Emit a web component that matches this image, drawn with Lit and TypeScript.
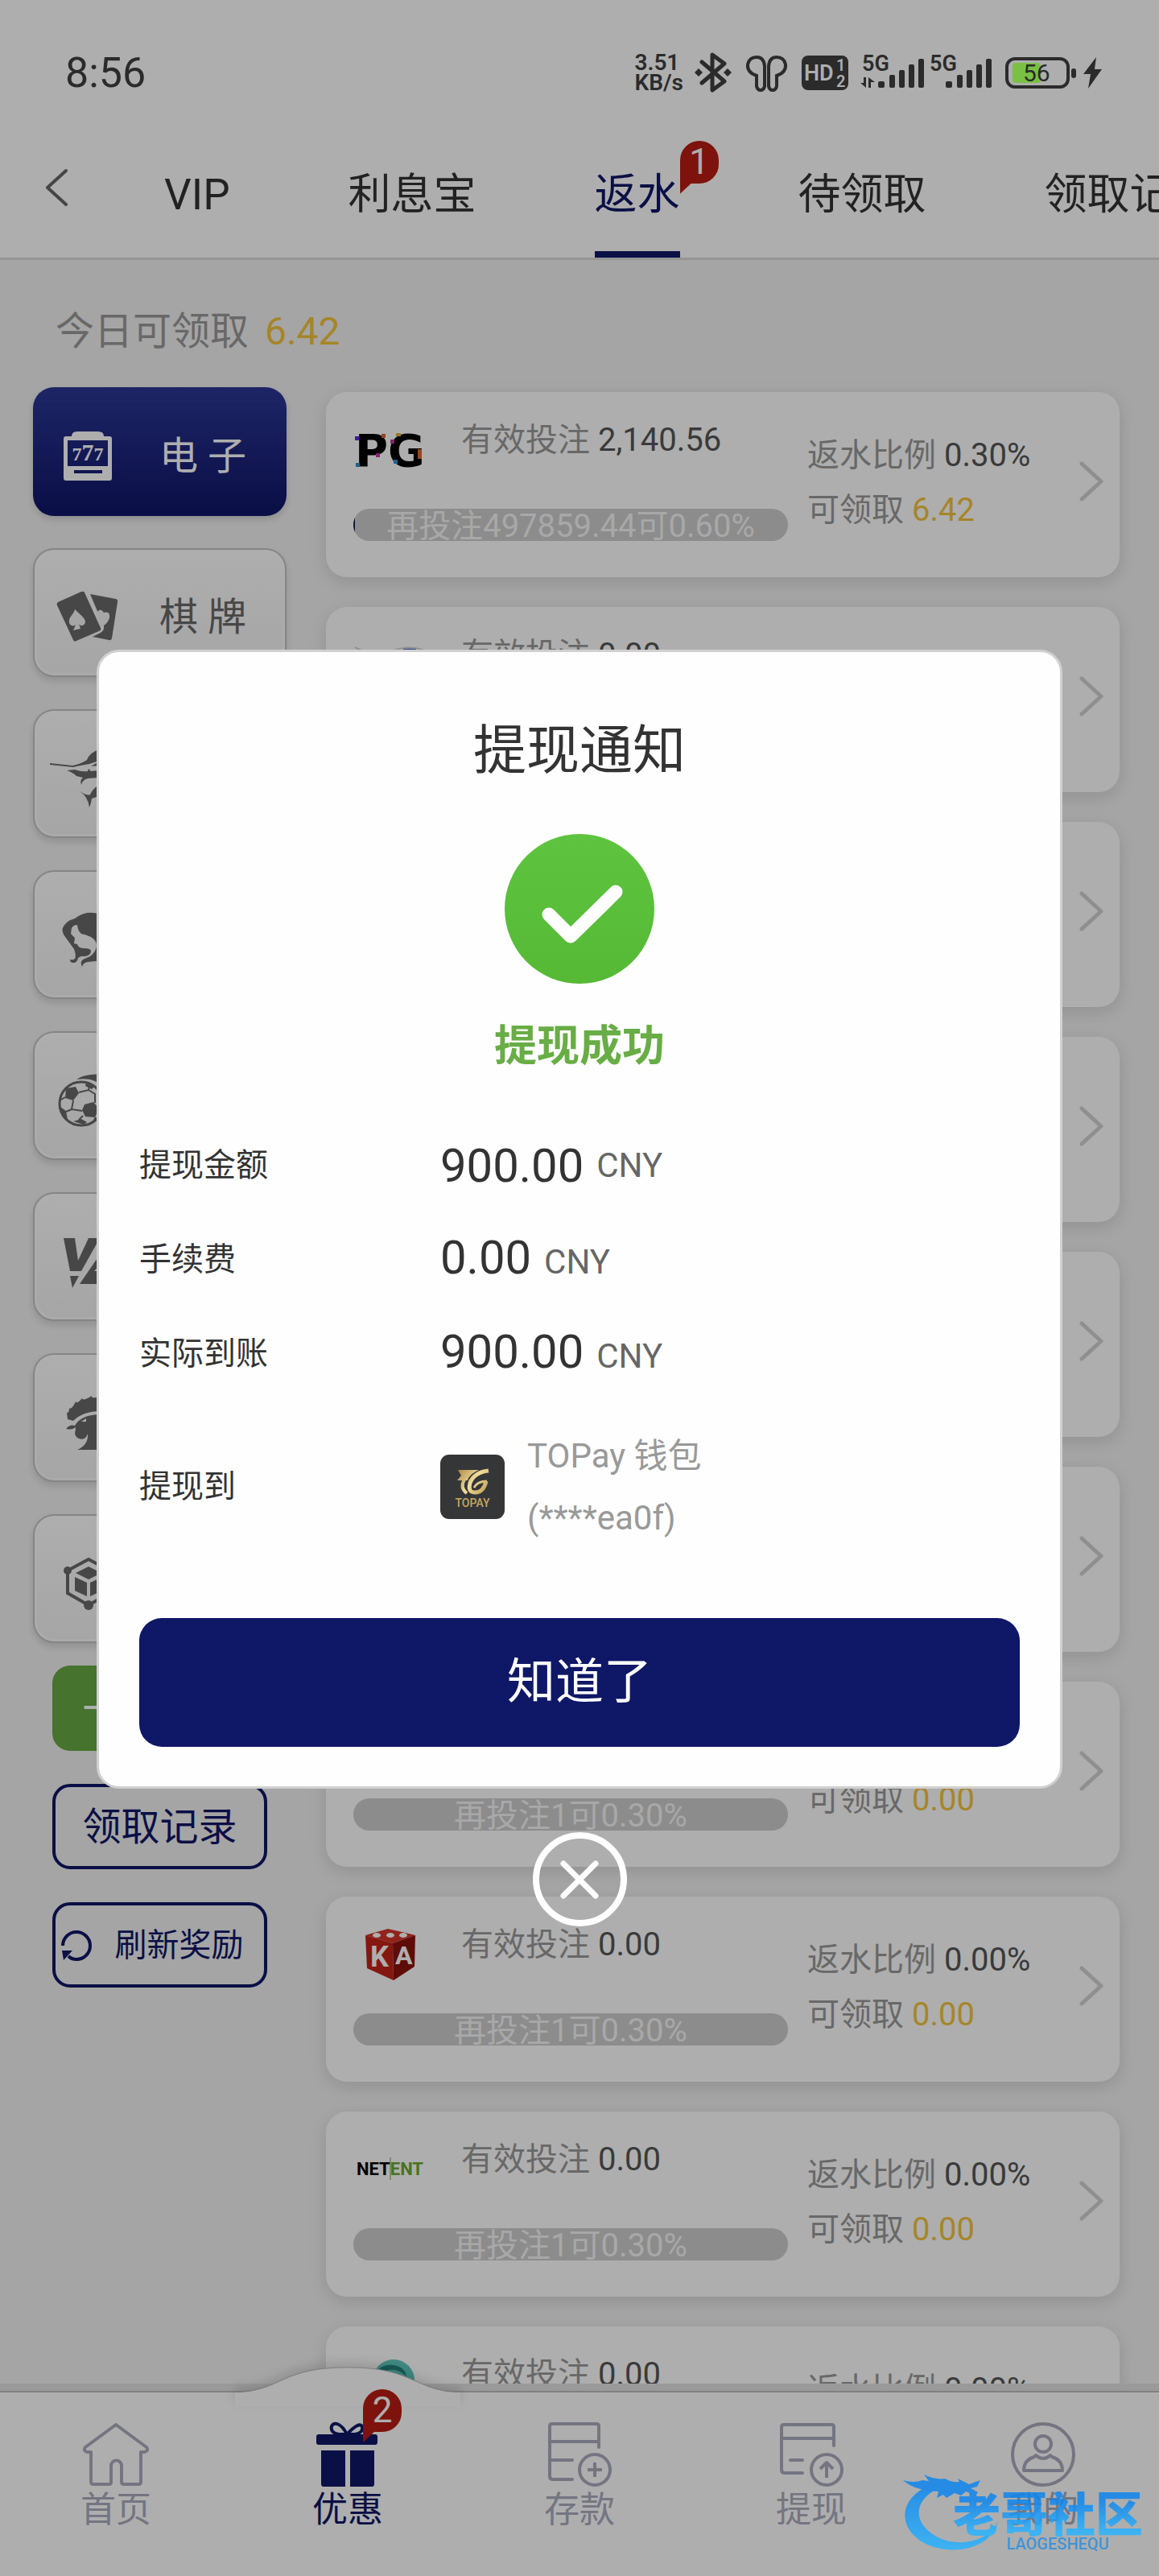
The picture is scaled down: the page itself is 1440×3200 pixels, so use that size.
import { LitElement, html, svg, css, nothing } from "lit";
import { customElement, property } from "lit/decorators.js";
import { classMap } from "lit/directives/class-map.js";

const slotIcon = svg`
  <path fill="currentColor" fill-rule="evenodd" d="M22 13q0-6 7-6h26q7 0 7 6h7q3 0 3 3v49q0 3-3 3H15q-3 0-3-3V16q0-3 3-3zM17 18v32h50V18zM25 55v4h35v-4z"/>
  <text class="sevens" x="42" y="43" text-anchor="middle" font-size="24" fill="currentColor">7<tspan font-size="30">7</tspan>7</text>`;
const cardsIcon = svg`
  <path fill="currentColor" d="M45 9l32 6q3 1 2 4l-7 45q-1 3-4 2l-20-4 10-5q5-3 4-8z"/>
  <path fill="#f3f3f3" d="M53 32q5-7 9 0 8-2 7 6-1 6-8 11l-5-7z"/>
  <path fill="currentColor" d="M5 19L34 6q3-1 4 1l20 44q1 3-2 4L28 67q-3 2-4-1L4 23q-1-3 1-4z"/>
  <path fill="#f3f3f3" d="M26 28c8 8 12 10 13 15 0 5-6 7-8 3l2 6-9 2 3-7c-3 3-9 1-8-5 0-5 5-7 7-14z"/>`;
const fishIcon = svg`
  <path fill="currentColor" d="M-5 19L23 22Q34 20 41 15 44 6 56 2V16L44 20Q32 22 24 24L-5 21zM46 23l10-6v5z"/>
  <path fill="currentColor" d="M16 28L26 27Q34 30 42 29L43 26 46 29 56 28V37L42 38Q36 39 34 46 32 40 36 37L28 35Q24 31 16 28z"/>
  <path fill="currentColor" d="M32 54Q42 60 45 58 48 51 56 46V60L47 63Q46 70 44 74 42 60 32 54z"/>`;
const womanIcon = svg`
  <path fill="currentColor" d="M60 8Q52 4 41 5 32 7 26 12 18 14 15 18 8 24 12 32L25 50Q28 58 26 62 24 64 20 63 20 67 24 67 29 67 30 61 34 58 38 59 46 58 46 52 45 49 38 49 30 49 29 44L25 43 26 36 21 31 22 24Q24 20 29 20 30 28 34 31 40 32 46 35 53 39 53 46 52 54 45 59L36 63Q32 66 35 72 36 67 42 66L60 64z"/>`;
const ballIcon = svg`
  <path fill="currentColor" d="M28 12C38 5 50 6 62 5V22C52 12 42 10 28 12z"/>
  <circle cx="34" cy="42" r="27" fill="none" stroke="currentColor" stroke-width="3"/>
  <path fill="currentColor" d="M15 23l12-2 4 8-7 9-10-3zM38 43l11-3 7 8-5 11-12-1-4-8zM8 46l7 5 2 11-6-3zM40 16l10 5-3 3-8-4zM24 64l10-3 7 4-4 3z"/>
  <path fill="none" stroke="currentColor" stroke-width="2" d="M31 28l12-3 8 5v11M24 38l-2 11 13 2M15 52l7-3M36 57l-5 5M7 38l7-4M43 25l1-5M52 59l-3 5"/>`;
const esportIcon = svg`
  <path fill="currentColor" d="M12 9h14l4 28L43 9h14L34 50H20zM20 56h11l-8 15zM32 66l26-38v14l-8 8h8v16z"/>`;
const roosterIcon = svg`
  <path fill="currentColor" d="M17 34l-1-8q3 0 3-6 3 3 8-8 1 4 8-4 1 4 12-3-1 4 11 1v18Q36 24 24 36z"/>
  <path fill="currentColor" fill-rule="evenodd" d="M26 42Q34 28 58 28v44H29q14-6 13-20-3 9-11 6-7-3-4-11zM34 37l6-4v4z"/>
  <path fill="currentColor" d="M15 46q6-7 12-3-3 5-12 3z"/>`;
const blockIcon = svg`
  <path fill="none" stroke="currentColor" stroke-width="4" d="M17 22L43 8l26 14v28L43 65 17 50z"/>
  <circle cx="17" cy="22" r="5" fill="currentColor"/><circle cx="43" cy="65" r="6" fill="currentColor"/><circle cx="69" cy="22" r="5" fill="currentColor"/>
  <path fill="currentColor" d="M43 17l16 8-16 8-16-8zM26 30l15 7v17l-15-7zM60 30l-15 7v17l15-7z"/>`;

const categories = [
  { name: "电 子", icon: slotIcon },
  { name: "棋 牌", icon: cardsIcon },
  { name: "捕 鱼", icon: fishIcon },
  { name: "真 人", icon: womanIcon },
  { name: "体 育", icon: ballIcon },
  { name: "电 竞", icon: esportIcon },
  { name: "斗 鸡", icon: roosterIcon },
  { name: "区块链", icon: blockIcon },
];

const pgLogo = svg`
  <text class="pg" x="2" y="54" font-size="56" fill="#000">PG</text>
  <path fill="#5b2bd8" d="M2 17h5v5H2z"/><path fill="#e0662b" d="M35 14h5v5h-5zM80 33h5v12h-5z"/>
  <path fill="#2c8ed0" d="M3 50h5v5H3zM50 46h5v5h-5z"/><path fill="#c23aa4" d="M28 38h5v5h-5zM46 21h5v5h-5z"/><path fill="#e3b23a" d="M53 13h6v4h-6z"/>`;
const arcLogo = svg`
  <path fill="none" stroke="#3f66c4" stroke-width="3" d="M62 15h16"/>
  <path fill="none" stroke="#d4d4d4" stroke-width="2" d="M2 12l8 4M50 16q20-7 38 0"/>`;
const diceLogo = svg`
  <path fill="#d4362a" d="M43 2l34 8-28 10-34-10z"/>
  <path fill="#c22318" d="M15 10l34 10 1 46-33-15z"/>
  <path fill="#8c120c" d="M77 10L49 20l1 46 26-17z"/>
  <g fill="#fff"><ellipse cx="29" cy="10" rx="5" ry="3"/><ellipse cx="46" cy="10" rx="5" ry="3"/><ellipse cx="62" cy="10" rx="5" ry="3"/></g>
  <text class="bold" x="21" y="49" font-size="36" fill="#fff">K</text>
  <text class="bold" x="52" y="46" font-size="32" fill="#fff">A</text>`;
const netentLogo = svg`
  <text class="bold" x="4" y="41" font-size="22" fill="#000">NET<tspan fill="#6aa92f">ENT</tspan></text>
  <path stroke="#6aa92f" d="M46 19v28"/>`;
const tealLogo = svg`
  <circle cx="50" cy="29" r="26" fill="#5cc9bd"/>
  <path fill="#23857f" d="M26 24q6-16 24-14 14 2 16 14-10-10-22-8-10 1-14 14z"/>
  <path fill="#d8f2f2" d="M38 25q8-8 18 2l-8 6z"/>`;

const platforms = [
  { logo: pgLogo, bet: "2,140.56", rate: "0.30%", claim: "6.42", next: "再投注497859.44可0.60%", done: 0.4 },
  { logo: arcLogo, bet: "0.00" },
  {}, {}, {}, {}, {},
  { logo: diceLogo },
  { logo: netentLogo },
  { logo: tealLogo },
];

@customElement("status-icons")
class StatusIcons extends LitElement {
  static styles = css`
    :host { display: flex; align-items: center; gap: 14px; color: #2b2b2b; }
    .speed { font-size: 28px; line-height: 25px; font-weight: 600; }
    .icon { display: block; flex: none; font-family: Roboto, sans-serif; font-weight: 600; }
  `;
  render() {
    return html`
      <div class="speed">3.51<br />KB/s</div>
      <svg class="icon" width="46" height="50" fill="none" stroke="currentColor" stroke-width="5" stroke-linejoin="round" aria-hidden="true">
        <path d="M9 12l28 24-15 11V3l15 11L9 38" stroke-linecap="round"/>
        <path d="M5 20l5 5-5 5-5-5zM41 20l5 5-5 5-5-5z" fill="currentColor" stroke="none"/>
      </svg>
      <svg class="icon" width="58" height="50" fill="none" stroke="currentColor" stroke-width="4" aria-hidden="true">
        <path d="M27 17v25q-1 5-5 5t-5-5V29Q5 25 6 15 8 6 17 6t10 11z"/>
        <path d="M32 17v25q1 5 5 5t5-5V29q12-4 11-14-2-9-11-9t-10 11z"/>
      </svg>
      <svg class="icon" width="60" height="50" aria-hidden="true">
        <rect x="1" y="4" width="58" height="43" rx="8" fill="currentColor"/>
        <text x="4" y="35" font-size="27" fill="#aeaeae">HD</text>
        <text x="44" y="23" font-size="20" fill="#aeaeae">1</text>
        <text x="44" y="43" font-size="20" fill="#aeaeae">2</text>
      </svg>
      <svg class="icon" width="166" height="50" fill="currentColor" aria-hidden="true">
        <text x="2" y="23" font-size="27">5G</text>
        <path d="M4 31h3v13L0 38h4zM13 44h-3V31l8 6h-5z"/>
        <rect x="22" y="36" width="8" height="8" rx="2"/><rect x="36" y="28" width="7" height="16" rx="2"/><rect x="48" y="22" width="7" height="22" rx="2"/><rect x="60" y="15" width="7" height="29" rx="2"/><rect x="72" y="8" width="7" height="36" rx="2"/>
        <text x="86" y="23" font-size="27">5G</text>
        <rect x="106" y="36" width="8" height="8" rx="2"/><rect x="120" y="28" width="7" height="16" rx="2"/><rect x="132" y="22" width="7" height="22" rx="2"/><rect x="144" y="15" width="7" height="29" rx="2"/><rect x="156" y="8" width="7" height="36" rx="2"/>
      </svg>
      <svg class="icon" width="121" height="50" fill="currentColor" aria-hidden="true">
        <rect x="9" y="13" width="35" height="25" rx="4" fill="#7ac143"/>
        <rect x="2" y="8" width="76" height="35" rx="10" fill="none" stroke="currentColor" stroke-width="4"/>
        <rect x="82" y="20" width="6" height="12" rx="3"/>
        <text x="22" y="36" font-size="30" font-weight="400">56</text>
        <path d="M113 6L97 27h9l-3 18 17-24h-9z"/>
      </svg>`;
  }
}

@customElement("count-badge")
class CountBadge extends LitElement {
  static styles = css`
    :host { display: block; width: 48px; height: 53px; border-radius: 24px 24px 24px 0; background: #b81c12; color: #fff; font-size: 44px; line-height: 53px; text-align: center; }
    .tail { display: block; width: 14px; height: 13px; background: #b81c12; clip-path: polygon(0 0, 100% 0, 0 100%); }
  `;
  render() {
    return html`<slot></slot><span class="tail"></span>`;
  }
}

@customElement("rebate-card")
class RebateCard extends LitElement {
  @property({ attribute: false }) item: any = {};
  static styles = css`
    :host { display: block; }
    .card { box-sizing: border-box; height: 230px; display: flex; align-items: center; gap: 24px; padding: 0 20px 8px 34px; border-radius: 26px; background: #fff; box-shadow: 0 6px 22px rgba(0, 0, 0, 0.12); font-size: 40px; color: #999; }
    .left { flex: 0 1 540px; }
    .head { display: flex; gap: 44px; height: 68px; line-height: 44px; }
    .logo { display: block; flex: none; }
    .pg { font-family: "DejaVu Sans", sans-serif; font-weight: 700; }
    .bold { font-family: Roboto, sans-serif; font-weight: 700; }
    .value { color: #555; }
    .gold { color: #f3c43c; }
    .bar { position: relative; margin-top: 39px; height: 40px; line-height: 44px; border-radius: 20px; background: #cdcdcd; overflow: hidden; text-align: center; color: #f6f6f6; white-space: nowrap; }
    .fill { position: absolute; inset: 0 auto 0 0; background: #0f1767; }
    .label { position: relative; }
    .right { flex: 1; padding-top: 4px; line-height: 68px; white-space: nowrap; }
    .more { border: 0; padding: 0; background: none; color: #d2d2d2; }
    .arrow { display: block; }
  `;
  render() {
    const { logo, bet = "0.00", rate = "0.00%", claim = "0.00", next = "再投注1可0.30%", done = 0 } = this.item;
    return html`
      <article class="card">
        <div class="left">
          <div class="head">
            <svg class="logo" width="90" height="68" aria-hidden="true">${logo ?? nothing}</svg>
            <span>有效投注 <span class="value">${bet}</span></span>
          </div>
          <div class="bar">
            <span class="fill" style="width:${done}%"></span>
            <span class="label">${next}</span>
          </div>
        </div>
        <div class="right">
          <div>返水比例 <span class="value">${rate}</span></div>
          <div>可领取 <span class="gold">${claim}</span></div>
        </div>
        <button class="more" aria-label="详情">
          <svg class="arrow" width="30" height="50" fill="none" stroke="currentColor" stroke-width="5" stroke-linecap="round" stroke-linejoin="round"><path d="M3 3l24 22L3 47"/></svg>
        </button>
      </article>`;
  }
}

const homeIcon = svg`<path d="M42 3L4 31q-3 4 2 6h5v37q0 3 3 3h20q2 0 2-3V54a6 6 0 0 1 13 0v20q0 3 3 3h18q3 0 3-3V37h5q5-2 2-6z"/>`;
const giftIcon = svg`
  <path fill="currentColor" stroke="none" d="M6 15h70q3 0 3 3v7q0 3-3 3H6q-3 0-3-3v-7q0-3 3-3zM9 35h30v45H12q-3 0-3-3zM45 35h30v42q0 3-3 3H45z"/>
  <path d="M41 15C34 1 25-1 22 5q-2 8 9 10h20Q62 13 60 5 56-1 41 15z"/>`;
const depositIcon = svg`
  <path stroke-linecap="round" d="M66 31V5q0-3-3-3H8Q5 2 5 5v62q0 4 4 4h24M5 24h61M5 47h28"/>
  <circle cx="61" cy="59" r="19"/><path d="M61 50v18M52 59h18"/>`;
const withdrawIcon = svg`
  <path stroke-linecap="round" d="M70 29V6q0-3-3-3H8Q5 3 5 6v53q0 4 4 4h22M5 20h65M16 47h15"/>
  <circle cx="61" cy="59" r="19"/><path d="M61 69V51M53 58l8-8 8 8"/>`;
const personIcon = svg`
  <circle cx="42" cy="40" r="38"/><circle cx="42" cy="27" r="10"/>
  <path d="M18 60q0-13 13-17l2-2q9 8 18 0l2 2q13 4 13 17z"/>`;

const navItems = [
  { name: "首页", icon: homeIcon },
  { name: "优惠", icon: giftIcon, badge: 2 },
  { name: "存款", icon: depositIcon },
  { name: "提现", icon: withdrawIcon },
  { name: "我的", icon: personIcon },
];

@customElement("app-nav")
class AppNav extends LitElement {
  static styles = css`
    :host { display: block; }
    .nav { box-sizing: border-box; display: flex; height: 230px; padding-top: 37px; border-top: 2px solid #bcbcbc; background: #fff; box-shadow: 0 -9px 0 #e2e2e2; }
    .item { position: relative; flex: 1; display: flex; flex-direction: column; align-items: center; gap: 2px; color: #abacbe; font-size: 44px; line-height: 54px; text-decoration: none; }
    .active { color: #0f1767; }
    .icon { position: relative; display: block; overflow: visible; }
    .label { position: relative; }
    .hump { position: absolute; top: -69px; left: 50%; margin-left: -140px; filter: drop-shadow(0 -6px 6px rgba(0, 0, 0, 0.12)); }
    .badge { position: absolute; left: 50%; top: -41px; margin-left: 19px; }
  `;
  render() {
    return html`
      <nav class="nav">
        ${navItems.map(
          (n) => html`
            <a class=${classMap({ item: true, active: !!n.badge })} href="#">
              ${n.badge
                ? html`<svg class="hump" width="280" height="50" aria-hidden="true">
                    <path fill="#fff" d="M0 32C56 32 56 2 134 1h12c78 1 78 31 134 31v18H0z"/>
                    <path fill="none" stroke="#b4b4b4" d="M0 31C56 31 56 2 134 1h12c78 1 78 30 134 30"/>
                  </svg>`
                : nothing}
              <svg class="icon" width="84" height="80" fill="none" stroke="currentColor" stroke-width="4" stroke-linejoin="round" aria-hidden="true">${n.icon}</svg>
              <span class="label">${n.name}</span>
              ${n.badge ? html`<count-badge class="badge">${n.badge}</count-badge>` : nothing}
            </a>`
        )}
      </nav>`;
  }
}

@customElement("withdraw-dialog")
class WithdrawDialog extends LitElement {
  static styles = css`
    :host { display: flex; flex-direction: column; align-items: center; justify-content: center; gap: 54px; background: rgba(0, 0, 0, 0.318); }
    .panel { box-sizing: border-box; width: calc(100% - 240px); display: flex; flex-direction: column; align-items: center; padding: 83px 50px 49px; border: 3px solid #d0d0d0; border-radius: 28px; background: #fefefe; color: #333; }
    .title { margin: 0; font-size: 66px; line-height: 80px; font-weight: 400; }
    .check { display: block; margin-top: 63px; }
    .result { margin: 48px 0 59px; font-size: 53px; line-height: 60px; font-weight: 700; color: #68ad45; }
    .rows { align-self: stretch; margin: 0; }
    .row { display: grid; grid-template-columns: 374px 1fr; align-items: center; height: 117px; }
    .wallet-row { height: auto; margin-top: 30px; }
    .name { font-size: 40px; line-height: 60px; }
    .amount { display: flex; align-items: baseline; gap: 16px; margin: 0; font-size: 58px; line-height: 60px; }
    .centered { align-items: center; }
    .unit { font-size: 42px; color: #666; }
    .wallet { display: flex; align-items: center; gap: 28px; margin: 0; font-size: 42px; line-height: 77px; color: #999; }
    .brand { display: block; flex: none; font-family: Roboto, sans-serif; font-weight: 500; }
    .ok { align-self: stretch; height: 160px; margin-top: 86px; border: 0; border-radius: 28px; background: #0f1767; color: #fff; font: 400 60px/80px Roboto, "Noto Sans CJK SC", sans-serif; }
    .close { box-sizing: border-box; display: grid; place-items: center; width: 117px; height: 117px; padding: 0; border: 8px solid #fff; border-radius: 50%; background: none; color: #fff; }
  `;
  render() {
    const rows = [["提现金额", "900.00"], ["手续费", "0.00"], ["实际到账", "900.00"]];
    return html`
      <section class="panel" role="dialog" aria-labelledby="title">
        <h2 class="title" id="title">提现通知</h2>
        <svg class="check" width="186" height="186" viewBox="0 0 186 186" aria-hidden="true">
          <defs><linearGradient id="g" x2="0" y2="1"><stop stop-color="#5ec43f"/><stop offset="1" stop-color="#55b935"/></linearGradient></defs>
          <circle cx="93" cy="93" r="93" fill="url(#g)"/>
          <path d="M55 100l27 27 56-55" fill="none" stroke="#fff" stroke-width="17" stroke-linecap="round" stroke-linejoin="round"/>
        </svg>
        <p class="result">提现成功</p>
        <dl class="rows">
          ${rows.map(
            ([name, value], i) => html`<div class="row">
              <dt class="name">${name}</dt>
              <dd class=${classMap({ amount: true, centered: i === 0 })}><span>${value}</span><span class="unit">CNY</span></dd>
            </div>`
          )}
          <div class="row wallet-row">
            <dt class="name">提现到</dt>
            <dd class="wallet">
              <svg class="brand" width="80" height="80" aria-hidden="true">
                <defs><linearGradient id="gold" gradientUnits="userSpaceOnUse" x1="20" y1="18" x2="60" y2="50"><stop stop-color="#a8843f"/><stop offset=".5" stop-color="#f0dc9a"/><stop offset="1" stop-color="#b8934a"/></linearGradient></defs>
                <rect width="80" height="80" rx="11" fill="#343638"/>
                <path fill="url(#gold)" d="M22 19h26q-9 4-13 10l-1 3H21l5-6z"/>
                <g fill="none" stroke="url(#gold)">
                  <path stroke-width="4" d="M30 31q-6 10 3 17"/>
                  <path stroke-width="5" d="M60 20q-18 2-23 15-3 12 6 12 11 0 14-14"/>
                  <path stroke-width="3" d="M58 33q-12 0-16 8"/>
                </g>
                <text x="40" y="65" text-anchor="middle" font-size="14" fill="#c9a75f">TOPAY</text>
              </svg>
              <span>TOPay 钱包<br />(****ea0f)</span>
            </dd>
          </div>
        </dl>
        <button class="ok">知道了</button>
      </section>
      <button class="close" aria-label="关闭">
        <svg width="48" height="48" fill="none" stroke="currentColor" stroke-width="7" stroke-linecap="round"><path d="M4 4l40 40M44 4L4 44"/></svg>
      </button>`;
  }
}

@customElement("app-root")
class AppRoot extends LitElement {
  static styles = css`
    :host { display: block; font-family: Roboto, "Noto Sans CJK SC", sans-serif; }
    .screen { position: relative; display: flex; flex-direction: column; height: 100vh; overflow: hidden; background: #f2f2f2; color: #333; }
    .top { flex: none; background: #fff; border-bottom: 3px solid #dadada; }
    .status { position: relative; z-index: 3; box-sizing: border-box; display: flex; align-items: center; justify-content: space-between; height: 160px; padding: 20px 70px 0 81px; color: #2b2b2b; font-size: 52px; }
    .tabs { display: flex; height: 160px; gap: 147px; padding-left: 56px; font-size: 53px; line-height: 164px; white-space: nowrap; }
    .back { display: grid; place-items: center; width: 28px; padding: 0 0 14px; margin-right: -27px; border: 0; background: none; color: #666; }
    .tab { position: relative; flex: none; color: inherit; text-decoration: none; }
    .current { box-sizing: border-box; border-bottom: 8px solid #0f1767; color: #0f1767; }
    .tab-badge { position: absolute; left: 100%; top: 15px; }
    .main { flex: 1; min-height: 0; overflow: hidden; padding: 0 49px 0 41px; }
    .sum { box-sizing: border-box; height: 158px; margin: 0; padding: 16px 0 0 28px; font-size: 48px; line-height: 146px; color: #999; }
    .gold { margin-left: 8px; color: #f3c43c; }
    .columns { display: grid; grid-template-columns: 315px minmax(0, 1fr); gap: 49px; }
    .side { display: flex; flex-direction: column; gap: 40px; }
    .cat { flex: none; box-sizing: border-box; display: flex; align-items: center; gap: 47px; height: 160px; padding: 8px 0 0 24px; border: 2px solid #c4c4c4; border-radius: 26px; background: linear-gradient(#fff, #f3f3f3); box-shadow: inset 0 0 0 3px rgba(255, 255, 255, 0.6), 0 5px 8px rgba(0, 0, 0, 0.12); color: #696969; font: 400 48px/60px Roboto, "Noto Sans CJK SC", sans-serif; }
    .cat-name { padding-top: 4px; }
    .chosen { border-color: transparent; background: linear-gradient(#2c3796, #0f1567) border-box; box-shadow: 0 4px 8px rgba(0, 0, 0, 0.15); color: #fff; }
    .cat-icon { display: block; flex: none; overflow: visible; }
    .sevens { font-family: "Liberation Serif", serif; font-weight: 700; }
    .actions { display: flex; flex-direction: column; gap: 41px; padding: 0 24px; margin-top: -12px; }
    .action { box-sizing: border-box; display: flex; align-items: center; justify-content: center; height: 106px; padding: 2px 0 0; border: 4px solid #0f1767; border-radius: 22px; background: none; color: #0f1767; font: 400 48px/60px Roboto, "Noto Sans CJK SC", sans-serif; }
    .claim { border: 0; background: #67a942; color: #fff; }
    .refresh { gap: 28px; font-size: 40px; padding-right: 20px; }
    .cards { display: flex; flex-direction: column; gap: 37px; padding-top: 6px; }
    .nav { position: relative; flex: none; margin-top: 9px; }
    .mask { position: absolute; inset: 0; z-index: 2; }
    .mark { position: absolute; z-index: 4; right: 20px; bottom: 30px; width: 298px; height: 96px; opacity: 0.85; }
    .dragon { position: absolute; inset: 0; }
    .mark-text { position: absolute; right: 0; top: 21px; font-size: 59px; line-height: 60px; font-weight: 900; color: transparent; background: linear-gradient(#0f86ee 20%, #2bb4ff 85%); background-clip: text; -webkit-background-clip: text; }
    .mark-sub { position: absolute; right: 42px; top: 74px; font-size: 20px; line-height: 24px; font-weight: 500; color: #2b8fe0; }
  `;

  render() {
    const tabs = ["VIP", "利息宝", "返水", "待领取", "领取记录"];
    return html`
      <div class="screen">
        <header class="top">
          <div class="status"><span>8:56</span><status-icons></status-icons></div>
          <nav class="tabs">
            <button class="back" aria-label="返回">
              <svg width="28" height="48" fill="none" stroke="currentColor" stroke-width="4" stroke-linecap="round" stroke-linejoin="round"><path d="M26 3L3 24l23 21"/></svg>
            </button>
            ${tabs.map(
              (t) => html`<a class=${classMap({ tab: true, current: t === "返水" })} href="#">${t}${t === "返水" ? html`<count-badge class="tab-badge">1</count-badge>` : nothing}</a>`
            )}
          </nav>
        </header>
        <main class="main">
          <p class="sum">今日可领取 <span class="gold">6.42</span></p>
          <div class="columns">
            <aside class="side">
              ${categories.map(
                (c, i) => html`<button class=${classMap({ cat: true, chosen: i === 0 })}>
                  <svg class="cat-icon" width="84" height="72" aria-hidden="true">${c.icon}</svg><span class="cat-name">${c.name}</span>
                </button>`
              )}
              <div class="actions">
                <button class="action claim">一键领取</button>
                <button class="action">领取记录</button>
                <button class="action refresh">
                  <svg width="40" height="40" fill="none" stroke="currentColor" stroke-width="4" aria-hidden="true"><path d="M3 20A17 17 0 1 1 20 37q-6 0-10-4"/><path d="M2 26h13L4 38z" fill="currentColor" stroke="none"/></svg>
                  刷新奖励
                </button>
              </div>
            </aside>
            <div class="cards">${platforms.map((p) => html`<rebate-card .item=${p}></rebate-card>`)}</div>
          </div>
        </main>
        <app-nav class="nav"></app-nav>
        <withdraw-dialog class="mask"></withdraw-dialog>
        <div class="mark">
          <svg class="dragon" width="298" height="96" aria-hidden="true">
            <defs><linearGradient id="sea" x2="0" y2="1"><stop stop-color="#0f86ee"/><stop offset="1" stop-color="#2bb4ff"/></linearGradient></defs>
            <path fill="url(#sea)" d="M34 13C-4 28-10 66 28 86 62 102 110 92 118 58 106 84 66 92 40 76 10 58 14 30 46 16z"/>
            <path fill="#0f86ee" d="M0 7Q14 11 24 7l8 1-6-8q14 7 26 5 8 5 18 4l-2-4 14 7 14-5-4 8-8 2 9 5-3 4-12-5-6 5-8-3-10 6-4-4-8 4 2-8Q14 20 0 7z"/>
          </svg>
          <span class="mark-text">老哥社区</span>
          <span class="mark-sub">LAOGESHEQU</span>
        </div>
      </div>`;
  }
}
